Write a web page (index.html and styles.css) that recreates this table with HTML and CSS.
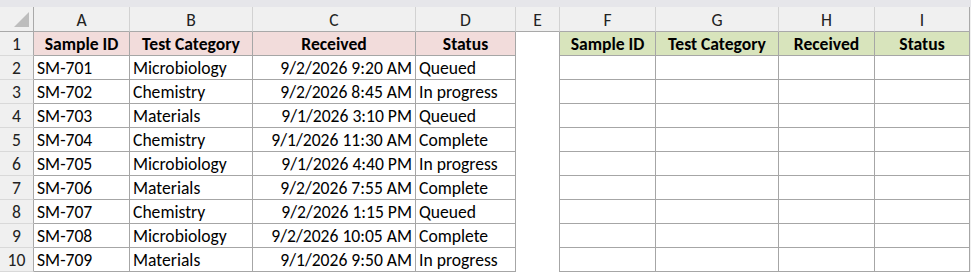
FILE: index.html
```html
<!DOCTYPE html>
<html>
<head>
<meta charset="utf-8">
<link rel="stylesheet" href="styles.css">
</head>
<body>
<div class="band"></div>
<div class="sheet">
  <div class="ch corner"><svg width="17" height="16" viewBox="0 0 17 16"><polygon points="16,0 16,15 1,15" fill="#bdbdbd"/></svg></div>
  <div class="ch">A</div><div class="ch">B</div><div class="ch">C</div><div class="ch">D</div><div class="ch">E</div><div class="ch">F</div><div class="ch">G</div><div class="ch">H</div><div class="ch">I</div>

  <div class="rh">1</div>
  <div class="c hp">Sample ID</div><div class="c hp">Test Category</div><div class="c hp">Received</div><div class="c hp">Status</div>
  <div class="e"></div>
  <div class="c hg">Sample ID</div><div class="c hg">Test Category</div><div class="c hg">Received</div><div class="c hg">Status</div>

  <div class="rh">2</div>
  <div class="c">SM-701</div><div class="c">Microbiology</div><div class="c r">9/2/2026 9:20 AM</div><div class="c">Queued</div>
  <div class="e"></div><div class="c"></div><div class="c"></div><div class="c"></div><div class="c"></div>

  <div class="rh">3</div>
  <div class="c">SM-702</div><div class="c">Chemistry</div><div class="c r">9/2/2026 8:45 AM</div><div class="c">In progress</div>
  <div class="e"></div><div class="c"></div><div class="c"></div><div class="c"></div><div class="c"></div>

  <div class="rh">4</div>
  <div class="c">SM-703</div><div class="c">Materials</div><div class="c r">9/1/2026 3:10 PM</div><div class="c">Queued</div>
  <div class="e"></div><div class="c"></div><div class="c"></div><div class="c"></div><div class="c"></div>

  <div class="rh">5</div>
  <div class="c">SM-704</div><div class="c">Chemistry</div><div class="c r">9/1/2026 11:30 AM</div><div class="c">Complete</div>
  <div class="e"></div><div class="c"></div><div class="c"></div><div class="c"></div><div class="c"></div>

  <div class="rh">6</div>
  <div class="c">SM-705</div><div class="c">Microbiology</div><div class="c r">9/1/2026 4:40 PM</div><div class="c">In progress</div>
  <div class="e"></div><div class="c"></div><div class="c"></div><div class="c"></div><div class="c"></div>

  <div class="rh">7</div>
  <div class="c">SM-706</div><div class="c">Materials</div><div class="c r">9/2/2026 7:55 AM</div><div class="c">Complete</div>
  <div class="e"></div><div class="c"></div><div class="c"></div><div class="c"></div><div class="c"></div>

  <div class="rh">8</div>
  <div class="c">SM-707</div><div class="c">Chemistry</div><div class="c r">9/2/2026 1:15 PM</div><div class="c">Queued</div>
  <div class="e"></div><div class="c"></div><div class="c"></div><div class="c"></div><div class="c"></div>

  <div class="rh">9</div>
  <div class="c">SM-708</div><div class="c">Microbiology</div><div class="c r">9/2/2026 10:05 AM</div><div class="c">Complete</div>
  <div class="e"></div><div class="c"></div><div class="c"></div><div class="c"></div><div class="c"></div>

  <div class="rh">10</div>
  <div class="c">SM-709</div><div class="c">Materials</div><div class="c r">9/1/2026 9:50 AM</div><div class="c">In progress</div>
  <div class="e"></div><div class="c"></div><div class="c"></div><div class="c"></div><div class="c"></div>
</div>
</body>
</html>
```
FILE: styles.css
```css
html, body {
  margin: 0;
  padding: 0;
  background: #ffffff;
}
body {
  font-family: Calibri, Carlito, Lato, "Liberation Sans", sans-serif;
  font-size: 17.6px;
  line-height: 20px;
  color: #000;
  width: 971px;
  height: 273px;
  overflow: hidden;
}
.band {
  height: 7px;
  background: #e6e6ea;
}
.sheet {
  display: grid;
  grid-template-columns: 34px 96px 123px 163px 100px 44px 96px 123px 96px 95px 1px;
  grid-template-rows: 25px repeat(10, 24px);
}
.ch {
  background: #f0f0f0;
  border-right: 1px solid #d2d2d2;
  border-bottom: 1px solid #a9a9a9;
  display: flex;
  align-items: center;
  justify-content: center;
  color: #222;
  padding-top: 1px;
}
.ch:nth-child(10) {
  border-right: 1px solid #a9a9a9;
}
.corner {
  border-right: 1px solid #a9a9a9;
  align-items: flex-start;
  justify-content: flex-end;
  padding: 5px 3px 0 0;
}
.sheet::after {
  content: "";
  grid-column: 11;
  grid-row: 1 / span 11;
  background: #f0f0f0;
}
.rh {
  grid-column: 1;
  background: #f0f0f0;
  border-right: 1px solid #a9a9a9;
  border-bottom: 1px solid #d9d9d9;
  display: flex;
  align-items: flex-end;
  justify-content: center;
  padding-bottom: 1px;
  color: #222;
}
.c {
  border-right: 1px solid #a6a6a6;
  border-bottom: 1px solid #a6a6a6;
  display: flex;
  align-items: flex-end;
  padding: 0 3px 1px 3px;
  white-space: nowrap;
  overflow: hidden;
}
.r {
  justify-content: flex-end;
}
.e {
  border-right: 1px solid #a6a6a6;
}
.hp, .hg {
  font-weight: bold;
  justify-content: center;
}
.hp {
  background: #f2dcdb;
}
.hg {
  background: #d8e4bc;
}
```
